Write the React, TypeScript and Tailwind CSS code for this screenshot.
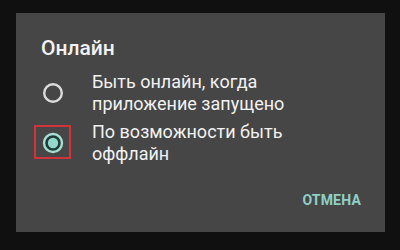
import React from "react";

function Radio({ checked }: { checked?: boolean }) {
  return (
    <svg width="22" height="22" viewBox="0 0 22 22" className="shrink-0">
      {checked ? (
        <>
          <circle cx="11" cy="11" r="9" fill="#1f3b37" stroke="#a7ddd3" strokeWidth="2.4" />
          <circle cx="11" cy="11" r="5.2" fill="#95d8cb" />
        </>
      ) : (
        <circle cx="11" cy="11" r="8.8" fill="none" stroke="#dcdcdc" strokeWidth="2.4" />
      )}
    </svg>
  );
}

export default function App() {
  return (
    <div
      className="w-[400px] h-[250px] bg-[#101010] pt-[13px] pl-[16px] overflow-hidden"
      style={{ fontFamily: "Roboto, 'Noto Sans', sans-serif" }}
    >
      <div className="relative w-[369px] h-[219px] bg-[#464646] flex flex-col pt-[23px] pl-[25px] pr-[24px] text-[#f2f2f2]">
        <div className="text-[21px] leading-[24px] font-medium">Онлайн</div>

        <div className="mt-[11px] flex items-center">
          <div className="w-[41px] pl-[1px]">
            <Radio />
          </div>
          <div className="pl-[10px] text-[18px] leading-[21.5px]">
            Быть онлайн, когда
            <br />
            приложение запущено
          </div>
        </div>

        <div className="mt-[7px] flex items-center">
          <div className="relative w-[41px] pl-[1px]">
            <Radio checked />
            <div className="absolute left-[-7px] top-[-7px] w-[37px] h-[34px] border-2 border-[#d0343a]" />
          </div>
          <div className="pl-[10px] text-[18px] leading-[21.5px]">
            По возможности быть
            <br />
            оффлайн
          </div>
        </div>

        <div className="mt-[26px] flex justify-end">
          <span className="text-[14px] leading-[20px] font-bold text-[#8fd0c4] tracking-[0.2px]">ОТМЕНА</span>
        </div>
      </div>
    </div>
  );
}
